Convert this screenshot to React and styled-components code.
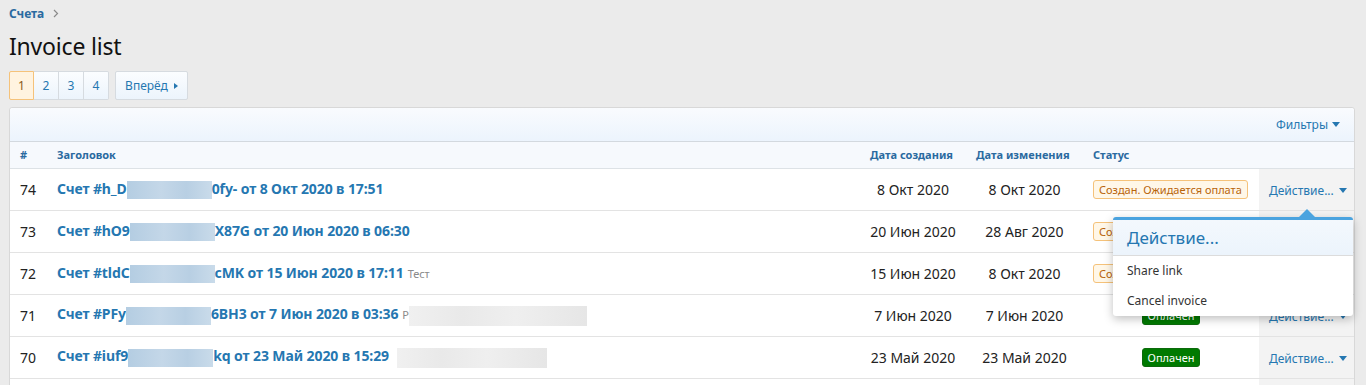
import React from 'react';
import styled, { createGlobalStyle } from 'styled-components';

const GlobalStyle = createGlobalStyle`
    html, body {
        margin: 0;
        padding: 0;
        background: #ebebeb;
        font-family: "Noto Sans", "Open Sans", sans-serif;
        color: #222;
    }
`;

const Page = styled.div`
    padding: 4px 11px 0 9px;
    height: 385px;
    overflow: hidden;
    box-sizing: border-box;
`;

const Breadcrumb = styled.div`
    display: flex;
    align-items: center;
    gap: 9px;
    height: 18px;
    font-size: 12px;

    a {
        color: #2a6aa0;
        font-weight: 700;
        text-decoration: none;
    }

    svg {
        display: block;
    }
`;

const Title = styled.h1`
    margin: 9px 0 0;
    font-size: 23px;
    font-weight: 400;
    line-height: 30px;
    color: #111;
    letter-spacing: -0.2px;
`;

const Pager = styled.div`
    display: flex;
    gap: 6px;
    margin-top: 10px;
`;

const PageGroup = styled.div`
    display: flex;
`;

const PageBtn = styled.div`
    display: flex;
    align-items: center;
    justify-content: center;
    box-sizing: border-box;
    height: 29px;
    width: ${(p) => p.w || 25}px;
    font-size: 12px;
    color: ${(p) => (p.active ? '#8a5a1a' : '#2577b1')};
    background: ${(p) => (p.active ? '#fff3e0' : 'linear-gradient(#fbfdff, #ecf4fc)')};
    border: 1px solid ${(p) => (p.active ? '#f5c27a' : '#d6dbe0')};
    border-left-width: ${(p) => (p.first || p.active ? 1 : 0)}px;
    border-radius: ${(p) => p.radius || '0'};
`;

const Caret = styled.span`
    display: inline-block;
    width: 0;
    height: 0;
    margin-left: ${(p) => p.gap || 5}px;
    border-left: ${(p) => (p.right ? '4px solid currentColor' : '4px solid transparent')};
    border-right: 4px solid transparent;
    border-top: ${(p) => (p.right ? '3px solid transparent' : '5px solid currentColor')};
    border-bottom: ${(p) => (p.right ? '3px solid transparent' : '0')};
    ${(p) => p.right && 'border-right: 0;'}
`;

const Panel = styled.div`
    margin-top: 7px;
    background: #fff;
    border: 1px solid #d8d8d8;
    border-radius: 3px;
    width: 1346px;
    box-sizing: border-box;
`;

const PanelHead = styled.div`
    display: flex;
    justify-content: flex-end;
    align-items: center;
    height: 33px;
    padding-right: 14px;
    background: linear-gradient(#f9fbfe, #ecf4fd);
    border-bottom: 1px solid #d3d9df;
    border-radius: 3px 3px 0 0;
    font-size: 12px;
    color: #2577b1;
`;

const Table = styled.table`
    width: 100%;
    border-collapse: collapse;
    table-layout: fixed;
`;

const Th = styled.th`
    height: 26px;
    padding: 0 0 0 10px;
    text-align: left;
    font-size: 11px;
    font-weight: 700;
    color: #2a6aa0;
    background: #f6f9fd;
    border-bottom: 1px solid #dde2e6;
    box-sizing: border-box;
`;

const Td = styled.td`
    position: relative;
    height: 41px;
    padding: 0 0 0 ${(p) => (p.center ? 0 : 10)}px;
    text-align: ${(p) => (p.center ? 'center' : 'left')};
    font-size: 14px;
    color: #222;
    border-bottom: 1px solid #e3e3e3;
    background: ${(p) => (p.muted ? '#f3f3f3' : 'transparent')};
    white-space: nowrap;
`;

const InvoiceLink = styled.a`
    color: #2577b1;
    font-weight: 700;
    font-size: 14px;
    text-decoration: none;
    letter-spacing: -0.1px;
`;

const Blur = styled.span`
    display: inline-block;
    vertical-align: middle;
    width: ${(p) => p.w}px;
    height: ${(p) => p.h || 18}px;
    margin: ${(p) => p.m || '0'};
    background: ${(p) => p.bg || 'linear-gradient(90deg, #b4cde2, #c4d7e8 40%, #b8cfe3 70%, #c9dbea)'};
`;

const Note = styled.span`
    color: #8a8a8a;
    font-size: 11px;
    font-weight: 400;
    margin-left: 4px;
`;

const Badge = styled.span`
    display: inline-block;
    padding: 1px 5px;
    font-size: 11px;
    line-height: 15px;
    border-radius: 3px;
    border: 1px solid ${(p) => (p.paid ? '#0c6a0c' : '#f5c27a')};
    background: ${(p) => (p.paid ? '#007a00' : '#fff7e8')};
    color: ${(p) => (p.paid ? '#fff' : '#b8640a')};
`;

const ActionToggle = styled.span`
    display: inline-flex;
    align-items: center;
    font-size: 12px;
    color: #2577b1;
`;

const Menu = styled.div`
    position: absolute;
    top: 48px;
    right: 1px;
    width: 240px;
    background: #fff;
    border-top: 3px solid #4aa3df;
    border-radius: 3px;
    box-shadow: 0 3px 10px rgba(0, 0, 0, 0.25);
    z-index: 5;
    text-align: left;

    &:before {
        content: '';
        position: absolute;
        top: -11px;
        right: 38px;
        border-left: 8px solid transparent;
        border-right: 8px solid transparent;
        border-bottom: 8px solid #4aa3df;
    }
`;

const MenuHead = styled.div`
    height: 35px;
    display: flex;
    align-items: center;
    padding-left: 14px;
    font-size: 17px;
    color: #2577b1;
    background: linear-gradient(#f3f8fd, #ecf4fc);
    border-bottom: 1px solid #dcdcdc;
`;

const MenuItem = styled.div`
    height: 30px;
    display: flex;
    align-items: center;
    padding-left: 14px;
    font-size: 12px;
    color: #333;
`;

const rows = [
    { id: 74, pre: 'Счет #h_D', post: '0fy- от 8 Окт 2020 в 17:51', created: '8 Окт 2020', changed: '8 Окт 2020', paid: false, menu: true },
    { id: 73, pre: 'Счет #hO9', post: 'X87G от 20 Июн 2020 в 06:30', created: '20 Июн 2020', changed: '28 Авг 2020', paid: false },
    { id: 72, pre: 'Счет #tldC', post: 'cMK от 15 Июн 2020 в 17:11', note: 'Тест', created: '15 Июн 2020', changed: '8 Окт 2020', paid: false },
    { id: 71, pre: 'Счет #PFy', post: '6BH3 от 7 Июн 2020 в 03:36', note: 'Р', tail: 178, created: '7 Июн 2020', changed: '7 Июн 2020', paid: true },
    { id: 70, pre: 'Счет #iuf9', post: 'kq от 23 Май 2020 в 15:29', tail: 150, tailGap: '0 0 0 8px', created: '23 Май 2020', changed: '23 Май 2020', paid: true },
    { id: 69, pre: '', post: '', created: '', changed: '', empty: true },
];

export default function App() {
    return (
        <Page>
            <GlobalStyle />
            <Breadcrumb>
                <a href="#">Счета</a>
                <svg width="6" height="9" viewBox="0 0 6 9">
                    <path d="M1 1l3.5 3.5L1 8" fill="none" stroke="#8a8a8a" strokeWidth="1.2" />
                </svg>
            </Breadcrumb>
            <Title>Invoice list</Title>
            <Pager>
                <PageGroup>
                    <PageBtn active radius="2px 0 0 2px">1</PageBtn>
                    <PageBtn>2</PageBtn>
                    <PageBtn>3</PageBtn>
                    <PageBtn radius="0 2px 2px 0">4</PageBtn>
                </PageGroup>
                <PageBtn first radius="2px" w={73}>
                    Вперёд<Caret right gap={6} />
                </PageBtn>
            </Pager>
            <Panel>
                <PanelHead>
                    Фильтры<Caret gap={4} />
                </PanelHead>
                <Table>
                    <colgroup>
                        <col style={{ width: 37 }} />
                        <col />
                        <col style={{ width: 106 }} />
                        <col style={{ width: 117 }} />
                        <col style={{ width: 176 }} />
                        <col style={{ width: 95 }} />
                    </colgroup>
                    <thead>
                        <tr>
                            <Th>#</Th>
                            <Th>Заголовок</Th>
                            <Th>Дата создания</Th>
                            <Th>Дата изменения</Th>
                            <Th>Статус</Th>
                            <Th />
                        </tr>
                    </thead>
                    <tbody>
                        {rows.map((r) => (
                            <tr key={r.id}>
                                <Td>{r.empty ? '' : r.id}</Td>
                                <Td>
                                    {!r.empty && (
                                        <InvoiceLink href="#">
                                            {r.pre}
                                            <Blur w={85} />
                                            {r.post}
                                            {r.note && <Note>{r.note}</Note>}
                                            {r.tail && (
                                                <Blur
                                                    w={r.tail}
                                                    h={20}
                                                    m={r.tailGap || '0'}
                                                    bg="linear-gradient(90deg, #f0f0f0, #e9e9e9 30%, #efefef 60%, #e6e6e6)"
                                                />
                                            )}
                                        </InvoiceLink>
                                    )}
                                </Td>
                                <Td center>{r.created}</Td>
                                <Td center>{r.changed}</Td>
                                <Td center={r.paid}>
                                    {!r.empty && (
                                        <Badge paid={r.paid}>{r.paid ? 'Оплачен' : 'Создан. Ожидается оплата'}</Badge>
                                    )}
                                </Td>
                                <Td muted>
                                    {!r.empty && (
                                        <ActionToggle>
                                            Действие...<Caret gap={5} />
                                        </ActionToggle>
                                    )}
                                    {r.menu && (
                                        <Menu>
                                            <MenuHead>Действие...</MenuHead>
                                            <MenuItem>Share link</MenuItem>
                                            <MenuItem>Cancel invoice</MenuItem>
                                        </Menu>
                                    )}
                                </Td>
                            </tr>
                        ))}
                    </tbody>
                </Table>
            </Panel>
        </Page>
    );
}
